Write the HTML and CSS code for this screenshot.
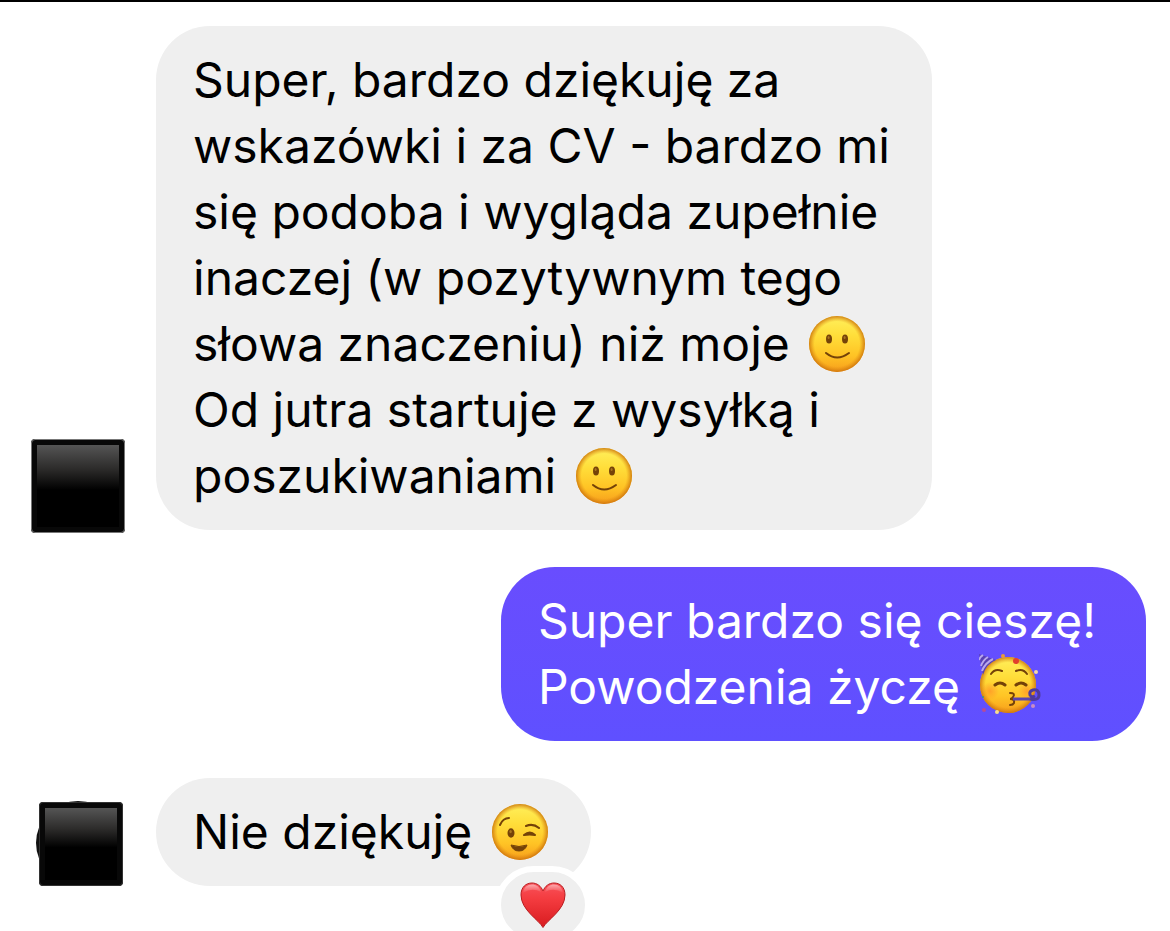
FILE: index.html
```
<!DOCTYPE html>
<html lang="pl">
<head>
  <meta charset="UTF-8">
  <meta name="viewport" content="width=device-width, initial-scale=1">
  <title>Wiadomości</title>
  <link rel="stylesheet" href="styles.css">
</head>
<body>
  <!-- shared gradients and the smiling face, used twice -->
  <svg class="defs" aria-hidden="true">
    <defs>
      <linearGradient id="face" x1="0" y1="0" x2="0" y2="1">
        <stop offset="0" stop-color="#fff05c"/>
        <stop offset="0.35" stop-color="#ffde3a"/>
        <stop offset="0.7" stop-color="#ffc425"/>
        <stop offset="1" stop-color="#f79d1b"/>
      </linearGradient>
      <radialGradient id="edge">
        <stop offset="0.8" stop-color="#e08a12" stop-opacity="0"/>
        <stop offset="1" stop-color="#c9700c" stop-opacity="0.85"/>
      </radialGradient>
      <radialGradient id="blush">
        <stop offset="0" stop-color="#ff7a28" stop-opacity="0.5"/>
        <stop offset="1" stop-color="#ff7a28" stop-opacity="0"/>
      </radialGradient>
      <linearGradient id="heart" x1="0" y1="0" x2="0" y2="1">
        <stop offset="0" stop-color="#f9525a"/>
        <stop offset="0.35" stop-color="#f43c40"/>
        <stop offset="1" stop-color="#d81b1f"/>
      </linearGradient>
      <linearGradient id="gloss" x1="0" y1="0" x2="0" y2="1">
        <stop offset="0" stop-color="#fff" stop-opacity="0.5"/>
        <stop offset="1" stop-color="#fff" stop-opacity="0"/>
      </linearGradient>
      <symbol id="smile" viewBox="0 0 58 58">
        <circle cx="29" cy="29" r="28" fill="url(#face)"/>
        <circle cx="29" cy="29" r="28" fill="url(#edge)"/>
        <ellipse cx="21" cy="24" rx="3" ry="4.5" fill="#744208"/>
        <ellipse cx="37" cy="24" rx="3" ry="4.5" fill="#744208"/>
        <ellipse cx="20.6" cy="22.6" rx="1" ry="1.5" fill="#a97520"/>
        <ellipse cx="36.6" cy="22.6" rx="1" ry="1.5" fill="#a97520"/>
        <path d="M18 38q11 9 23 0" fill="none" stroke="#744208" stroke-width="2" stroke-linecap="round"/>
      </symbol>
    </defs>
  </svg>

  <main class="chat">
    <div class="row">
      <div class="side"><div class="avatar"></div></div>
      <p class="bubble">Super, bardzo dziękuję za<br>
        wskazówki i za CV - bardzo mi<br>
        się podoba i wygląda zupełnie<br>
        inaczej (w pozytywnym tego<br>
        słowa znaczeniu) niż moje <svg class="emoji" role="img" aria-label="uśmiech"><use href="#smile"/></svg><br>
        Od jutra startuje z wysyłką i<br>
        poszukiwaniami <svg class="emoji" role="img" aria-label="uśmiech"><use href="#smile"/></svg></p>
    </div>

    <div class="row own">
      <p class="bubble">Super bardzo się cieszę!<br>
        Powodzenia życzę <svg class="emoji party" viewBox="0 0 62 62" role="img" aria-label="impreza">
          <circle cx="29" cy="31" r="28" fill="url(#face)"/>
          <circle cx="29" cy="31" r="28" fill="url(#edge)"/>
          <circle cx="11" cy="37" r="9" fill="url(#blush)"/>
          <circle cx="48" cy="37" r="9" fill="url(#blush)"/>
          <path d="M0 0l17 6q-10 4-13 15z" fill="#5940b4"/>
          <path d="M4 1q-3 2-4 5M9 3q-5 3-7 9M14 5q-8 4-11 12" fill="none" stroke="#b9a8ee" stroke-width="2"/>
          <g fill="none" stroke="#744208" stroke-width="2" stroke-linecap="round">
            <path d="M12 20q4-6 11-3M37 17q7-3 11 3"/>
            <path d="M16 31q5-4 10 0M37 31q5-4 10 0" stroke-width="3"/>
            <path d="M31 39q6 0 3 4q-1 2-3 2q5 0 4 4q-1 2-4 2"/>
          </g>
          <path d="M34 45h17" stroke="#5b45ad" stroke-width="3"/>
          <path d="M51 45q9 2 9-4t-6-5q-4 1-3 5q2 3 5 1" fill="none" stroke="#4e3a9c" stroke-width="3"/>
          <circle cx="37" cy="7" r="3" fill="#e2402c"/>
          <circle cx="24" cy="2" r="2" fill="#e79a3c"/>
          <circle cx="57" cy="18" r="2" fill="#f3d5a2"/>
          <circle cx="5" cy="56" r="2" fill="#b34b9a"/>
          <circle cx="18" cy="58" r="2" fill="#f6dd8e"/>
          <circle cx="54" cy="52" r="2" fill="#c98cc4"/>
          <circle cx="4" cy="43" r="1" fill="#3c8d92"/>
        </svg></p>
    </div>

    <div class="row">
      <div class="side"><div class="avatar small"></div></div>
      <p class="bubble">Nie dziękuję <svg class="emoji" viewBox="0 0 58 58" role="img" aria-label="oczko">
          <circle cx="29" cy="29" r="28" fill="url(#face)"/>
          <circle cx="29" cy="29" r="28" fill="url(#edge)"/>
          <ellipse cx="20" cy="30" rx="3.5" ry="4.7" fill="#744208"/>
          <ellipse cx="19.6" cy="28.6" rx="1.2" ry="1.6" fill="#a97520"/>
          <path d="M9 22q3-7 9-7M35 23q7-3 13 2" fill="none" stroke="#744208" stroke-width="2" stroke-linecap="round"/>
          <path d="M33 32q6-5 11 0q-5-1-11 0z" fill="#744208" stroke="#744208" stroke-width="2" stroke-linejoin="round"/>
          <path d="M20 42q8 3 16 0q-2 6-8 6t-8-6z" fill="#744208" stroke="#744208" stroke-linejoin="round"/>
        </svg>
        <button class="reaction" type="button" aria-label="Reakcja: serce">
          <svg class="heart" viewBox="0 0 46 46">
            <path d="M23 45.500C19 38 1 28 1 13C1 5 6 1 12 1C17 1 21 4 23 9C25 4 29 1 34 1C40 1 45 5 45 13C45 28 27 38 23 45.500z" fill="url(#heart)" stroke="#b91d20" stroke-width="1"/>
            <path d="M3 11C4 0 19 0 21 10Q12 5 3 11zM25 10C27 0 42 0 43 11Q34 5 25 10z" fill="url(#gloss)"/>
          </svg>
        </button></p>
    </div>
  </main>
</body>
</html>
```
FILE: styles.css
```
body {
  margin: 0;
  background: #fff;
  font-family: Inter, "Liberation Sans", sans-serif;
}
.defs {
  position: absolute;
  width: 0;
  height: 0;
}
.chat {
  box-sizing: border-box;
  height: 100vh;
  overflow: hidden;
  border-top: 2px solid #000;
  padding: 24px 24px 0 0;
  display: flex;
  flex-direction: column;
  gap: 37px;
}
.row {
  display: flex;
  align-items: flex-end;
  flex-shrink: 0;
}
.row.own {
  justify-content: flex-end;
}
.side {
  flex: 0 0 156px;
  display: flex;
  justify-content: center;
}
.avatar {
  box-sizing: border-box;
  width: 94px;
  height: 94px;
  margin-bottom: -3px;
  border: 6px solid #080808;
  border-radius: 4px;
  outline: 1px solid #777;
  outline-offset: -1px;
  background: linear-gradient(#555, #2b2a29 30%, #000 55%);
}
.avatar.small {
  width: 84px;
  height: 84px;
  margin-bottom: 0;
  margin-left: 6px;
  outline-color: #333;
  position: relative;
}
/* edge of the round picture under the square */
.avatar.small::before {
  content: "";
  position: absolute;
  z-index: -1;
  left: -9px;
  top: -7px;
  width: 84px;
  height: 84px;
  border-radius: 50%;
  background: #111;
}
.bubble {
  position: relative;
  margin: 0;
  padding: 21px 42px 21px 37px;
  border-radius: 54px;
  background: #efefef;
  color: #000;
  font-size: 48px;
  line-height: 66px;
  white-space: nowrap;
}
.own .bubble {
  padding-right: 50px;
  background: linear-gradient(#694dfe, #5f50ff);
  color: #fff;
}
.emoji {
  width: 58px;
  height: 58px;
  margin: -8px 0 -8px 5px;
  vertical-align: -4px;
}
.emoji.party {
  width: 62px;
  height: 62px;
}
.reaction {
  position: absolute;
  right: 0;
  top: 88px;
  box-sizing: content-box;
  width: 84px;
  height: 66px;
  padding: 0;
  border: 6px solid #fff;
  border-radius: 40px;
  background: #efefef;
  display: flex;
  align-items: center;
  justify-content: center;
  cursor: pointer;
}
.heart {
  width: 46px;
  height: 46px;
}
```
